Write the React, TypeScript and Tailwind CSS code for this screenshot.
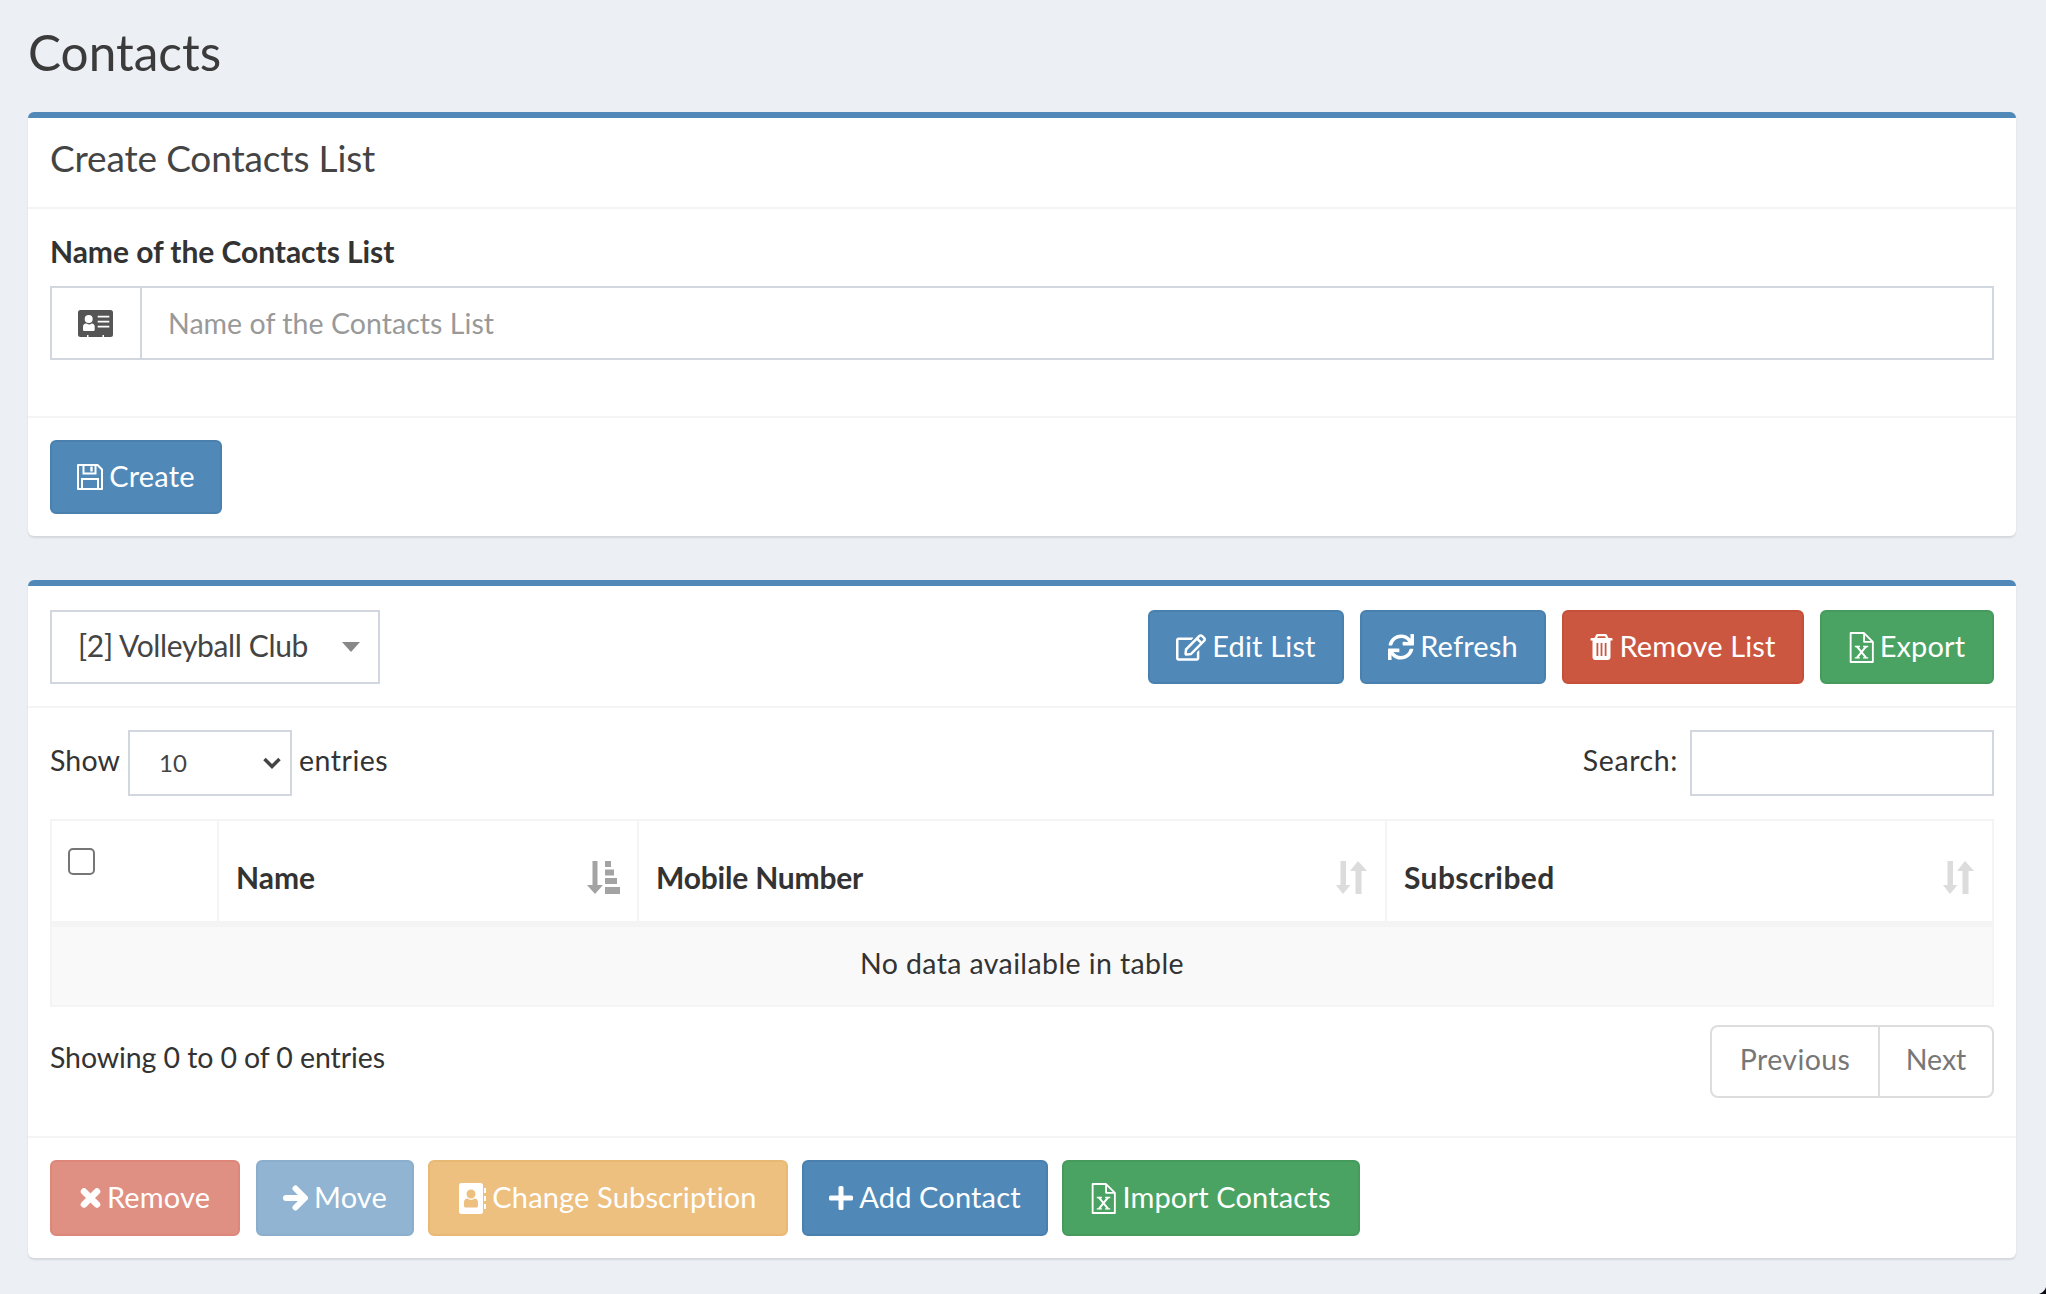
import React from "react";
import { FaRegEdit, FaSync } from "react-icons/fa";

const font = "font-['Lato','Liberation_Sans',sans-serif]";

function Trash({ className = "" }: { className?: string }) {
  return (
    <svg viewBox="0 0 22 26" className={className} fill="currentColor">
      <path fillRule="evenodd" d="M7 0h8a1.600 1.600 0 0 1 1.500 1L18 4h3a1 1 0 0 1 1 1v1.500h-2V23a3 3 0 0 1-3 3H5a3 3 0 0 1-3-3V6.500H0V5a1 1 0 0 1 1-1h3l1.500-3A1.600 1.600 0 0 1 7 0zM7.500 2.200 6.600 4h8.800l-.9-1.800zM6 9v13h1.800V9zm4.100 0v13h1.800V9zm4.100 0v13H16V9z" />
    </svg>
  );
}

function FileX({ className = "" }: { className?: string }) {
  return (
    <svg viewBox="0 0 24 30" className={className} fill="none" stroke="currentColor">
      <path strokeWidth="1.800" strokeLinejoin="round" d="M1.500 1h13L23 9.500V29H1.500z" />
      <path strokeWidth="1.800" strokeLinejoin="round" d="M14.500 1v8.500H23" />
      <path strokeWidth="2" d="M7.500 14l9 11M16.500 14l-9 11" />
      <path strokeWidth="1.300" d="M5.500 14h5M13.500 14h5M5.500 25h5M13.500 25h5" />
    </svg>
  );
}

function Floppy({ className = "" }: { className?: string }) {
  return (
    <svg viewBox="0 0 26 26" className={className} fill="none" stroke="currentColor" strokeWidth="2">
      <path strokeLinejoin="round" d="M1 1h19.500L25 5.500V25H1z" />
      <path d="M6.500 1v8.500h12V1M5 25V15h16v10" />
      <path strokeWidth="2.400" d="M14.500 2.500v5" />
    </svg>
  );
}

function Card({ className = "" }: { className?: string }) {
  return (
    <svg viewBox="0 0 35 27" className={className}>
      <path
        fill="#555"
        fillRule="evenodd"
        d="M2.500 0h30A2.500 2.500 0 0 1 35 2.500v22a2.500 2.500 0 0 1-2.500 2.500H26v-2h-1.500v2H10.500v-2H9v2H2.500A2.500 2.500 0 0 1 0 24.500v-22A2.500 2.500 0 0 1 2.500 0zM10.700 5a4 4 0 1 0 0 8 4 4 0 0 0 0-8zM8 13.500c-2 0-3 1.500-3 3.500v2.500c0 1 .6 1.500 1.500 1.500h8.500c1 0 1.700-.5 1.700-1.500V17c0-2-1-3.500-3-3.500-1 .7-1.700 1-2.500 1s-1.700-.3-2.700-1zM19.700 5.700v1.900h11.600V5.700zm0 5v1.900h11.600v-1.900zm0 5v1.900h11.600v-1.900z"
      />
    </svg>
  );
}

function Cross({ className = "" }: { className?: string }) {
  return (
    <svg viewBox="0 0 21 20" className={className} fill="none" stroke="currentColor" strokeWidth="6.500" strokeLinecap="round">
      <path d="M4 3.500l13 13M17 3.500l-13 13" />
    </svg>
  );
}

function Arrow({ className = "" }: { className?: string }) {
  return (
    <svg viewBox="0 0 25 26" className={className} fill="none" stroke="currentColor" strokeWidth="6" strokeLinecap="round" strokeLinejoin="round">
      <path d="M3 13h17M12.500 3.500L22 13l-9.500 9.500" />
    </svg>
  );
}

function Plus({ className = "" }: { className?: string }) {
  return (
    <svg viewBox="0 0 24 24" className={className} fill="currentColor">
      <path d="M9.500 1.500A1.500 1.500 0 0 1 11 0h2a1.500 1.500 0 0 1 1.500 1.500v8h8A1.500 1.500 0 0 1 24 11v2a1.500 1.500 0 0 1-1.500 1.500h-8v8A1.500 1.500 0 0 1 13 24h-2a1.500 1.500 0 0 1-1.500-1.500v-8h-8A1.500 1.500 0 0 1 0 13v-2a1.500 1.500 0 0 1 1.500-1.500h8z" />
    </svg>
  );
}

function Book({ className = "" }: { className?: string }) {
  return (
    <svg viewBox="0 0 27 31" className={className} fill="currentColor">
      <path
        fillRule="evenodd"
        d="M2.500 0h19A2.500 2.500 0 0 1 24 2.500V28.500a2.500 2.500 0 0 1-2.500 2.500h-19A2.500 2.500 0 0 1 0 28.500V2.500A2.500 2.500 0 0 1 2.500 0zM12 6.500a4.500 4.500 0 1 0 0 9 4.500 4.500 0 0 0 0-9zM8.500 15.500C6 15.500 5 17.500 5 19.500v3.200C5 24 5.800 24.500 7 24.500h10c1.200 0 2-.5 2-1.800v-3.200c0-2-1-4-3.500-4-1 .8-2.200 1.300-3.500 1.300s-2.500-.5-3.500-1.300z"
      />
      <path d="M25 5h2v5h-2zM25 13h2v5h-2zM25 21h2v5h-2z" />
    </svg>
  );
}

function SortAsc({ className = "" }: { className?: string }) {
  return (
    <svg viewBox="0 0 33 33" className={className} fill="#a3a3a3">
      <path d="M5.500 0h5v24H16L8 33 0 24h5.500zM18 0h6v6h-6zM18 8.500h9v6h-9zM18 17h12v6H18zM18 26h15v7H18z" />
    </svg>
  );
}

function SortBoth({ className = "" }: { className?: string }) {
  return (
    <svg viewBox="0 0 31 33" className={className} fill="#dcdcdc">
      <path d="M4.500 0h5.500v24h4.500l-7.500 9-7-9h4.500zM22 0l9 10h-5.500v23h-6V10H14z" />
    </svg>
  );
}

function Btn({
  w,
  h,
  color,
  icon,
  children,
}: {
  w: string;
  h: string;
  color: string;
  icon: React.ReactNode;
  children: React.ReactNode;
}) {
  return (
    <button
      className={`${w} ${h} ${color} flex shrink-0 items-center justify-center gap-[6px] rounded-[6px] border-2 text-[29px] leading-none text-white`}
    >
      {icon}
      <span className="pb-[3px] tracking-[0.15px]">{children}</span>
    </button>
  );
}

const blue = "bg-[#5089b8] border-[#4a80ad]";
const red = "bg-[#cc5741] border-[#c64f39]";
const green = "bg-[#4aa362] border-[#459a5c]";

export default function App() {
  return (
    <div className={`${font} relative h-[1294px] overflow-hidden bg-[#ecf0f5] pl-[28px] pr-[30px] text-[#333]`}>
      <h1 className="flex h-[112px] items-start pt-[23px] text-[49.5px] leading-[58px] text-[#3b3b3b]">Contacts</h1>

      <section className="h-[424px] rounded-[6px] border-t-[6px] border-[#5089b8] bg-white shadow-[0_2px_2px_rgba(0,0,0,0.1)]">
        <div className="flex h-[91px] items-center border-b-2 border-[#f4f4f4] px-[22px] pb-[9px] text-[37px] tracking-[-0.15px] text-[#444]">
          Create Contacts List
        </div>
        <div className="h-[209px] border-b-2 border-[#f4f4f4] px-[22px] pt-[24px]">
          <label className="block h-[53px] text-[30px] font-bold leading-[36px] tracking-[-0.05px]">Name of the Contacts List</label>
          <div className="flex h-[74px] border-2 border-[#d2d6de]">
            <div className="flex w-[90px] items-center justify-center border-r-2 border-[#d2d6de] pr-[2px]">
              <Card className="h-[27px] w-[35px]" />
            </div>
            <div className="flex flex-1 items-center pl-[26px] text-[28.5px] tracking-[0.05px] text-[#999]">Name of the Contacts List</div>
          </div>
        </div>
        <div className="px-[22px] pt-[22px]">
          <Btn w="w-[172px]" h="h-[74px]" color={blue} icon={<Floppy className="h-[26px] w-[26px]" />}>
            Create
          </Btn>
        </div>
      </section>

      <section className="mt-[44px] h-[678px] rounded-[6px] border-t-[6px] border-[#5089b8] bg-white shadow-[0_2px_2px_rgba(0,0,0,0.1)]">
        <div className="flex h-[122px] items-start justify-between border-b-2 border-[#f4f4f4] px-[22px] pt-[24px]">
          <div className="flex h-[74px] w-[330px] items-center justify-between border-2 border-[#d2d6de] pl-[26px] pr-[18px] text-[30px] tracking-[-0.35px] text-[#444]">
            <span className="pb-[4px]">[2] Volleyball Club</span>
            <span className="h-0 w-0 border-x-[9px] border-t-[10px] border-x-transparent border-t-[#888]" />
          </div>
          <div className="flex gap-[16px]">
            <Btn w="w-[196px]" h="h-[74px]" color={blue} icon={<FaRegEdit className="h-[27px] w-[30px]" />}>
              Edit List
            </Btn>
            <Btn w="w-[186px]" h="h-[74px]" color={blue} icon={<FaSync className="h-[26px] w-[26px]" />}>
              Refresh
            </Btn>
            <Btn w="w-[242px]" h="h-[74px]" color={red} icon={<Trash className="h-[26px] w-[23px]" />}>
              Remove List
            </Btn>
            <Btn w="w-[174px]" h="h-[74px]" color={green} icon={<FileX className="h-[31px] w-[25px]" />}>
              Export
            </Btn>
          </div>
        </div>

        <div className="flex h-[88px] items-end justify-between px-[22px] text-[28.5px]">
          <div className="flex items-center gap-[7px]">
            <span className="pb-[5px] pr-[1px] tracking-[0.15px]">Show</span>
            <div className="flex h-[66px] w-[164px] items-center justify-between border-2 border-[#d2d6de] pl-[29px] pr-[9px] text-[24px] text-[#444]">
              <span>10</span>
              <svg viewBox="0 0 18 12" className="h-[12px] w-[18px]" fill="none" stroke="#444" strokeWidth="3.500">
                <path d="M1.500 2l7.500 7.500L16.500 2" />
              </svg>
            </div>
            <span className="pb-[5px] tracking-[0.5px]">entries</span>
          </div>
          <div className="flex items-center gap-[12px]">
            <span className="pb-[5px] tracking-[0.6px]">Search:</span>
            <div className="h-[66px] w-[304px] border-2 border-[#d2d6de]" />
          </div>
        </div>

        <div className="mx-[22px] mt-[23px]">
          <table className="w-full table-fixed border-collapse">
            <thead>
              <tr className="h-[104px] border-2 border-b-[6px] border-[#f4f4f4] text-left text-[30px] font-bold">
                <th className="w-[167px] border-r-2 border-[#f4f4f4] pb-[20px] pl-[16px]">
                  <input type="checkbox" className="block h-[27px] w-[27px] appearance-none rounded-[5px] border-2 border-[#767676] bg-white" />
                </th>
                <th className="w-[420px] border-r-2 border-[#f4f4f4] pl-[17px] pr-[17px] pt-[13px]">
                  <div className="flex items-center justify-between">
                    <span>Name</span>
                    <SortAsc className="h-[33px] w-[33px]" />
                  </div>
                </th>
                <th className="w-[748px] border-r-2 border-[#f4f4f4] pl-[17px] pr-[18px] pt-[13px]">
                  <div className="flex items-center justify-between">
                    <span className="tracking-[-0.2px]">Mobile Number</span>
                    <SortBoth className="h-[33px] w-[31px]" />
                  </div>
                </th>
                <th className="pl-[17px] pr-[18px] pt-[13px]">
                  <div className="flex items-center justify-between">
                    <span className="tracking-[0.4px]">Subscribed</span>
                    <SortBoth className="h-[33px] w-[31px]" />
                  </div>
                </th>
              </tr>
            </thead>
            <tbody>
              <tr className="h-[82px] border-2 border-[#f4f4f4] bg-[#f9f9f9]">
                <td colSpan={4} className="pb-[5px] text-center text-[28.5px] tracking-[0.4px]">
                  No data available in table
                </td>
              </tr>
            </tbody>
          </table>
        </div>

        <div className="mt-[18px] flex h-[113px] items-start justify-between border-b-2 border-[#f4f4f4] px-[22px]">
          <span className="pt-[11px] text-[28.5px] tracking-[-0.1px]">Showing 0 to 0 of 0 entries</span>
          <div className="flex h-[73px] items-stretch rounded-[8px] border-2 border-[#ddd] text-[28.5px] text-[#777]">
            <span className="flex w-[168px] items-center justify-center border-r-2 border-[#ddd] pb-[4px] tracking-[0.4px]">Previous</span>
            <span className="flex w-[112px] items-center justify-center pb-[4px]">Next</span>
          </div>
        </div>

        <div className="flex gap-[14px] px-[22px] pt-[22px]">
          <div className="flex gap-[16px]">
            <Btn w="w-[190px]" h="h-[76px]" color="bg-[#e08f83] border-[#dc877a]" icon={<Cross className="h-[20px] w-[21px]" />}>
              Remove
            </Btn>
            <Btn w="w-[158px]" h="h-[76px]" color="bg-[#90b4d1] border-[#8aaecb]" icon={<Arrow className="h-[26px] w-[25px]" />}>
              Move
            </Btn>
          </div>
          <Btn w="w-[360px]" h="h-[76px]" color="bg-[#edc07f] border-[#e8b975]" icon={<Book className="h-[31px] w-[27px]" />}>
            Change Subscription
          </Btn>
          <Btn w="w-[246px]" h="h-[76px]" color={blue} icon={<Plus className="h-[24px] w-[24px]" />}>
            Add Contact
          </Btn>
          <Btn w="w-[298px]" h="h-[76px]" color={green} icon={<FileX className="h-[31px] w-[25px]" />}>
            Import Contacts
          </Btn>
        </div>
      </section>

      <svg viewBox="0 0 7 7" className="absolute bottom-0 right-0 h-[7px] w-[7px]">
        <path d="M7 0v7H0C3 6 6.500 3 7 0z" fill="#0b0b14" />
      </svg>
    </div>
  );
}
